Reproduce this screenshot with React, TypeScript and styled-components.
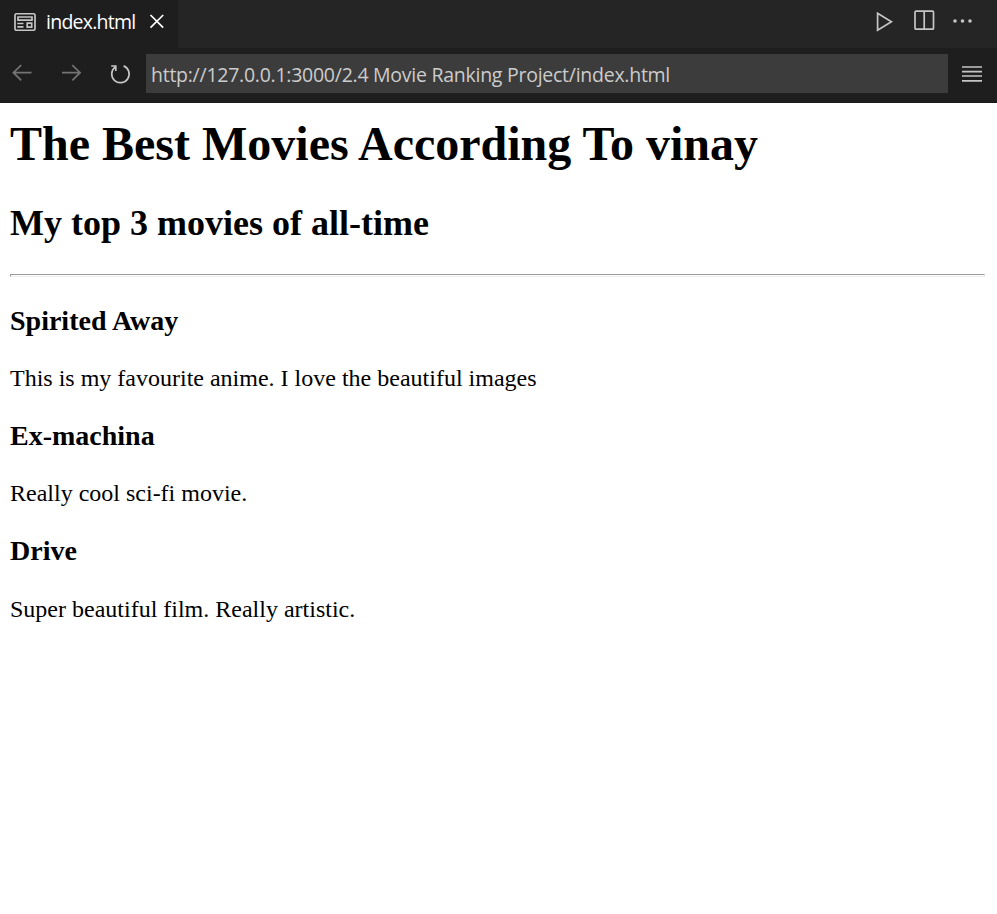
import React from "react";
import styled, { createGlobalStyle } from "styled-components";

const GlobalStyle = createGlobalStyle`
  *, *::before, *::after { box-sizing: border-box; }
  html, body, #root { height: 100%; margin: 0; }
  body { background: #fff; overflow: hidden; }
`;

const Editor = styled.div`
  display: flex;
  flex-direction: column;
  height: 100vh;
`;

const TabBar = styled.header`
  display: flex;
  height: 48px;
  background: #252526;
  font-family: "Open Sans", "Noto Sans", sans-serif;
`;

const Tab = styled.div`
  display: flex;
  align-items: flex-start;
  width: 178px;
  padding: 9px 0 0 13px;
  background: #1e1e1e;
`;

const TabTitle = styled.span`
  width: 90px;
  margin: -1px 12px 0 9px;
  font-size: 19.5px;
  line-height: 27px;
  letter-spacing: -0.75px;
  white-space: nowrap;
  color: #fff;
`;

const TabActions = styled.div`
  display: flex;
  gap: 16px;
  margin-left: auto;
  padding: 9px 22px 0 0;
`;

const Toolbar = styled.nav`
  display: flex;
  height: 55px;
  padding: 6px 0 10px;
  background: #1e1e1e;
  border-bottom: 1px solid #181818;
`;

const NavButtons = styled.div`
  display: flex;
  gap: 25px;
  width: 146px;
  padding: 7px 0 0 10px;
`;

const AddressField = styled.div`
  width: 802px;
  height: 39px;
  padding: 1px 0 0 5px;
  background: #3c3c3c;
  color: #cccccc;
  font: 19.5px/39px "Open Sans", "Noto Sans", sans-serif;
  letter-spacing: -0.26px;
  white-space: nowrap;
`;

const MenuButton = styled.div`
  padding: 8px 0 0 12px;
`;

const Icon = styled.svg<{ $tone?: string }>`
  display: block;
  flex: none;
  width: 24px;
  height: 24px;
  fill: none;
  stroke: ${(p) => p.$tone ?? "#c5c5c5"};
  stroke-width: 1.7;
`;

const Page = styled.main`
  flex: 1;
  padding: 13px 12px 0 10px;
  background: #fff;
  color: #000;
  font-family: "Liberation Serif", "Times New Roman", serif;
`;

const Title = styled.h1`
  margin: 0;
  font-size: 48px;
  line-height: 55px;
  white-space: nowrap;
`;

const Subtitle = styled.h2`
  margin: 31px 0 30px;
  font-size: 36px;
  line-height: 42px;
`;

const Rule = styled.hr`
  height: 3px;
  margin: 0 0 28px;
  border: 1px solid #eeeeee;
  border-top-color: #9a9a9a;
  border-left-color: #9a9a9a;
`;

const MovieTitle = styled.h3`
  margin: 0;
  font-size: 28px;
  line-height: 32px;
`;

const Review = styled.p`
  margin: 28.2px 0 27.8px;
  font-size: 24px;
  line-height: 27.2px;
`;

const movies = [
  { name: "Spirited Away", review: "This is my favourite anime. I love the beautiful images" },
  { name: "Ex-machina", review: "Really cool sci-fi movie." },
  { name: "Drive", review: "Super beautiful film. Really artistic." },
];

export default function App() {
  return (
    <>
      <GlobalStyle />
      <Editor>
        <TabBar>
          <Tab>
            <Icon viewBox="0 0 24 24">
              <rect x="2" y="4.75" width="20" height="16.5" rx="1.5" />
              <path d="M5 8h14v3.2H5zM4.3 14.5h6.2M4.3 17.8h6.2M14.2 14.2h4.5v4h-4.5z" />
            </Icon>
            <TabTitle>index.html</TabTitle>
            <Icon viewBox="0 0 24 24" $tone="#ffffff">
              <path d="M2.5 6l12.7 12.7M15.2 6L2.5 18.7" />
            </Icon>
          </Tab>
          <TabActions>
            <Icon viewBox="0 0 24 24">
              <path d="M6.6 4.2v17L20.4 12.7z" />
            </Icon>
            <Icon viewBox="0 0 24 24">
              <rect x="4" y="2.2" width="18.5" height="18" rx="1" />
              <path d="M13.2 2.2v18" />
            </Icon>
            <Icon viewBox="0 0 24 24">
              <g fill="#c5c5c5" stroke="none">
                <circle cx="4" cy="12" r="1.8" />
                <circle cx="11.5" cy="12" r="1.8" />
                <circle cx="19" cy="12" r="1.8" />
              </g>
            </Icon>
          </TabActions>
        </TabBar>
        <Toolbar>
          <NavButtons>
            <Icon viewBox="0 0 24 24" $tone="#747474">
              <path d="M21.5 11.7H3M11.2 4.2L3.4 11.7l7.8 7.7" />
            </Icon>
            <Icon viewBox="0 0 24 24" $tone="#747474">
              <path d="M3 11.7h18.5M13.3 4.2l7.8 7.5-7.8 7.7" />
            </Icon>
            <Icon viewBox="0 0 24 24">
              <path d="M7.4 5.9A8.7 8.7 0 1 0 15.6 4.9M3.2 5h4.6v5" />
            </Icon>
          </NavButtons>
          <AddressField>http://127.0.0.1:3000/2.4 Movie Ranking Project/index.html</AddressField>
          <MenuButton>
            <Icon viewBox="0 0 24 24">
              <path d="M2 5h20M2 9.7h20M2 14h20M2 18.9h20" />
            </Icon>
          </MenuButton>
        </Toolbar>
        <Page>
          <Title>The Best Movies According To vinay</Title>
          <Subtitle>My top 3 movies of all-time</Subtitle>
          <Rule />
          {movies.map((movie) => (
            <React.Fragment key={movie.name}>
              <MovieTitle>{movie.name}</MovieTitle>
              <Review>{movie.review}</Review>
            </React.Fragment>
          ))}
        </Page>
      </Editor>
    </>
  );
}
